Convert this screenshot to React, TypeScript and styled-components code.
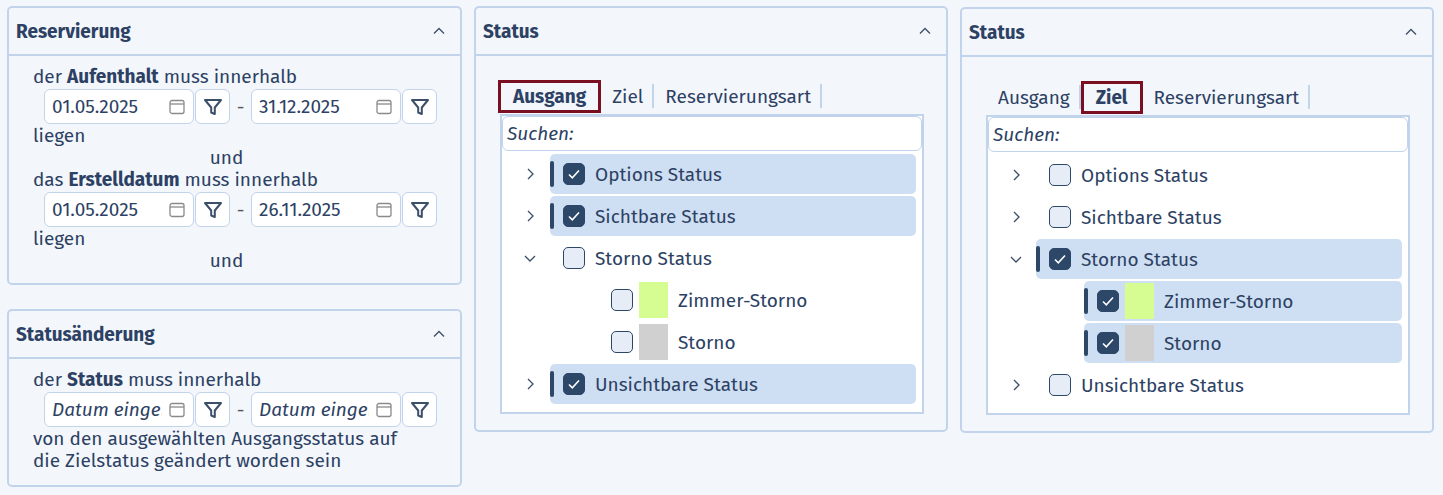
import React from "react";
import styled, { createGlobalStyle } from "styled-components";

const G = createGlobalStyle`
  body { margin: 0; background: #f3f6fb; font-family: "Fira Sans", Roboto, "Noto Sans", sans-serif; color: #2c4163; }
`;
const Page = styled.div`display: flex; gap: 12px; padding: 6px 8px 0 7px; align-items: flex-start;`;
const Col = styled.div`display: flex; flex-direction: column; gap: 24px; width: 455px;`;
const Panel = styled.div<{ w?: number; h?: number }>`
  width: ${p => p.w ?? 455}px; ${p => (p.h ? `height:${p.h}px;` : "")}
  box-sizing: border-box; border: 2px solid #c2d4ec; border-radius: 5px; background: #f3f6fb;
`;
const Head = styled.div`
  height: 46px; border-bottom: 2px solid #c2d4ec; display: flex; align-items: center; justify-content: space-between;
  padding: 0 14px 0 7px; font-weight: 700; font-size: 19px; color: #2c4163;
`;
const Body = styled.div`padding: 10px 20px 12px 24px; font-size: 19px; line-height: 22px;`;
const Center = styled.div`text-align: center; padding-right: 20px;`;
const DateRow = styled.div`display: flex; align-items: center; margin: 1px 0 1px 11px;`;
const Input = styled.div<{ ph?: boolean }>`
  width: 150px; height: 35px; box-sizing: border-box; background: #fff; border: 1px solid #c2d4ec; border-radius: 6px;
  display: flex; align-items: center; gap: 6px; padding: 0 7px 0 7px; font-size: 19px;
  font-style: ${p => (p.ph ? "italic" : "normal")}; white-space: nowrap;
`;
const InText = styled.span`flex: 1; overflow: hidden;`;
const Btn = styled.div`
  width: 35px; height: 35px; box-sizing: border-box; background: #fff; border: 1px solid #c2d4ec; border-radius: 6px;
  display: flex; align-items: center; justify-content: center; margin-left: 1px;
`;
const Dash = styled.span`width: 21px; text-align: center; color: #555;`;
const Cal = () => (
  <svg width="18" height="18" viewBox="0 0 18 18" style={{ flex: "none" }}><rect x="2" y="2.5" width="14" height="13" rx="2" fill="none" stroke="#8a8a8a" strokeWidth="1.3" /><line x1="2" y1="6" x2="16" y2="6" stroke="#8a8a8a" strokeWidth="1.3" /></svg>
);
const Funnel = () => (
  <svg width="22" height="22" viewBox="0 0 22 22"><path d="M3 4h16l-6.2 7.5V18l-3.6-1.5v-5Z" fill="none" stroke="#3c4f69" strokeWidth="2" strokeLinejoin="round" /></svg>
);
const Chevron = ({ up, down }: { up?: boolean; down?: boolean }) => (
  <svg width="14" height="14" viewBox="0 0 14 14"><path d={up ? "M2 9.5l5-5 5 5" : down ? "M2 5l5 5 5-5" : "M5 2l5 5-5 5"} fill="none" stroke="#3c4f69" strokeWidth="1.3" /></svg>
);

const DateLine = ({ a, b, ph }: { a: string; b: string; ph?: boolean }) => (
  <DateRow>
    <Input ph={ph}><InText>{a}</InText><Cal /></Input><Btn><Funnel /></Btn>
    <Dash>-</Dash>
    <Input ph={ph}><InText>{b}</InText><Cal /></Input><Btn><Funnel /></Btn>
  </DateRow>
);

const Tabs = styled.div`display: flex; align-items: center; margin: 23px 0 1px 0; font-size: 19px; height: 34px;`;
const Tab = styled.div<{ active?: boolean }>`
  padding: 0 ${p => (p.active ? "12px" : "11px")}; height: 33px; display: flex; align-items: center; box-sizing: border-box;
  ${p => (p.active ? "border: 3px solid #7a0f22; font-weight: 700;" : "")}
  position: relative;
  &:after { content: ""; ${p => (p.active ? "display:none;" : "")} position: absolute; right: 0; top: 4px; height: 24px; width: 2px; background: #c2d4ec; }
`;
const Tree = styled.div`background: #fff; border: 2px solid #c2d4ec; margin: 0 22px 0 24px; height: 300px; box-sizing: border-box;`;
const Search = styled.div`
  height: 35px; border: 1px solid #c2d4ec; border-radius: 6px; box-sizing: border-box; display: flex; align-items: center;
  padding-left: 4px; font-style: italic; font-size: 19px;
`;
const Rows = styled.div`padding: 3px 6px 0 0; display: flex; flex-direction: column; gap: 2px;`;
const Row = styled.div<{ sel?: boolean; lvl: number }>`
  height: 40px; display: flex; align-items: center; border-radius: 5px; font-size: 19px;
  margin-left: ${p => 48 + p.lvl * 48}px; position: relative;
  background: ${p => (p.sel ? "#cfdff3" : "transparent")};
  ${p => (p.sel ? `&:before{content:"";position:absolute;left:0;top:7px;bottom:7px;width:4px;border-radius:2px;background:#2c4768;}` : "")}
`;
const Exp = styled.div`position: absolute; left: -27px; width: 14px; height: 14px; display: flex;`;
const Box = styled.div<{ on?: boolean }>`
  width: 22px; height: 22px; box-sizing: border-box; border-radius: 5px; margin-left: 13px; margin-right: 10px;
  border: 1.5px solid #2c4768; background: ${p => (p.on ? "#2c4768" : "#e6edf7")}; display: flex; align-items: center; justify-content: center;
`;
const Swatch = styled.div<{ c: string }>`width: 29px; height: 36px; background: ${p => p.c}; margin: 0 10px 0 -4px;`;

type Item = { t: string; lvl: number; sel?: boolean; exp?: "r" | "d"; sw?: string };
const TreeView = ({ items }: { items: Item[] }) => (
  <Rows>
    {items.map((i, k) => (
      <Row key={k} sel={i.sel} lvl={i.lvl}>
        {i.exp && <Exp><Chevron down={i.exp === "d"} /></Exp>}
        <Box on={i.sel}>{i.sel && <svg width="14" height="14" viewBox="0 0 14 14"><path d="M2 7.5l3.3 3.3L12 3.5" fill="none" stroke="#fff" strokeWidth="1.6" /></svg>}</Box>
        {i.sw && <Swatch c={i.sw} />}
        <span>{i.t}</span>
      </Row>
    ))}
  </Rows>
);

const StatusPanel = ({ active, items, y }: { active: number; items: Item[]; y: number }) => (
  <Panel w={474} h={426} style={{ marginTop: y }}>
    <Head>Status<Chevron up /></Head>
    <Tabs style={{ paddingLeft: active === 0 ? 22 : 25 }}>
      {["Ausgang", "Ziel", "Reservierungsart"].map((t, i) => <Tab key={t} active={i === active}>{t}</Tab>)}
    </Tabs>
    <Tree>
      <Search>Suchen:</Search>
      <TreeView items={items} />
    </Tree>
  </Panel>
);

export default function App() {
  return (
    <>
      <G />
      <Page>
        <Col>
          <Panel h={279}>
            <Head>Reservierung<Chevron up /></Head>
            <Body>
              <div>der <b>Aufenthalt</b> muss innerhalb</div>
              <DateLine a="01.05.2025" b="31.12.2025" />
              <div>liegen</div>
              <Center>und</Center>
              <div>das <b>Erstelldatum</b> muss innerhalb</div>
              <DateLine a="01.05.2025" b="26.11.2025" />
              <div>liegen</div>
              <Center>und</Center>
            </Body>
          </Panel>
          <Panel h={178}>
            <Head>Statusänderung<Chevron up /></Head>
            <Body>
              <div>der <b>Status</b> muss innerhalb</div>
              <DateLine a="Datum eingeben" b="Datum eingeben" ph />
              <div>von den ausgewählten Ausgangsstatus auf</div>
              <div>die Zielstatus geändert worden sein</div>
            </Body>
          </Panel>
        </Col>
        <StatusPanel active={0} y={0} items={[
          { t: "Options Status", lvl: 0, sel: true, exp: "r" },
          { t: "Sichtbare Status", lvl: 0, sel: true, exp: "r" },
          { t: "Storno Status", lvl: 0, exp: "d" },
          { t: "Zimmer-Storno", lvl: 1, sw: "#d6fd91" },
          { t: "Storno", lvl: 1, sw: "#d0d0d0" },
          { t: "Unsichtbare Status", lvl: 0, sel: true, exp: "r" },
        ]} />
        <StatusPanel active={1} y={1} items={[
          { t: "Options Status", lvl: 0, exp: "r" },
          { t: "Sichtbare Status", lvl: 0, exp: "r" },
          { t: "Storno Status", lvl: 0, sel: true, exp: "d" },
          { t: "Zimmer-Storno", lvl: 1, sel: true, sw: "#d6fd91" },
          { t: "Storno", lvl: 1, sel: true, sw: "#d0d0d0" },
          { t: "Unsichtbare Status", lvl: 0, exp: "r" },
        ]} />
      </Page>
    </>
  );
}
